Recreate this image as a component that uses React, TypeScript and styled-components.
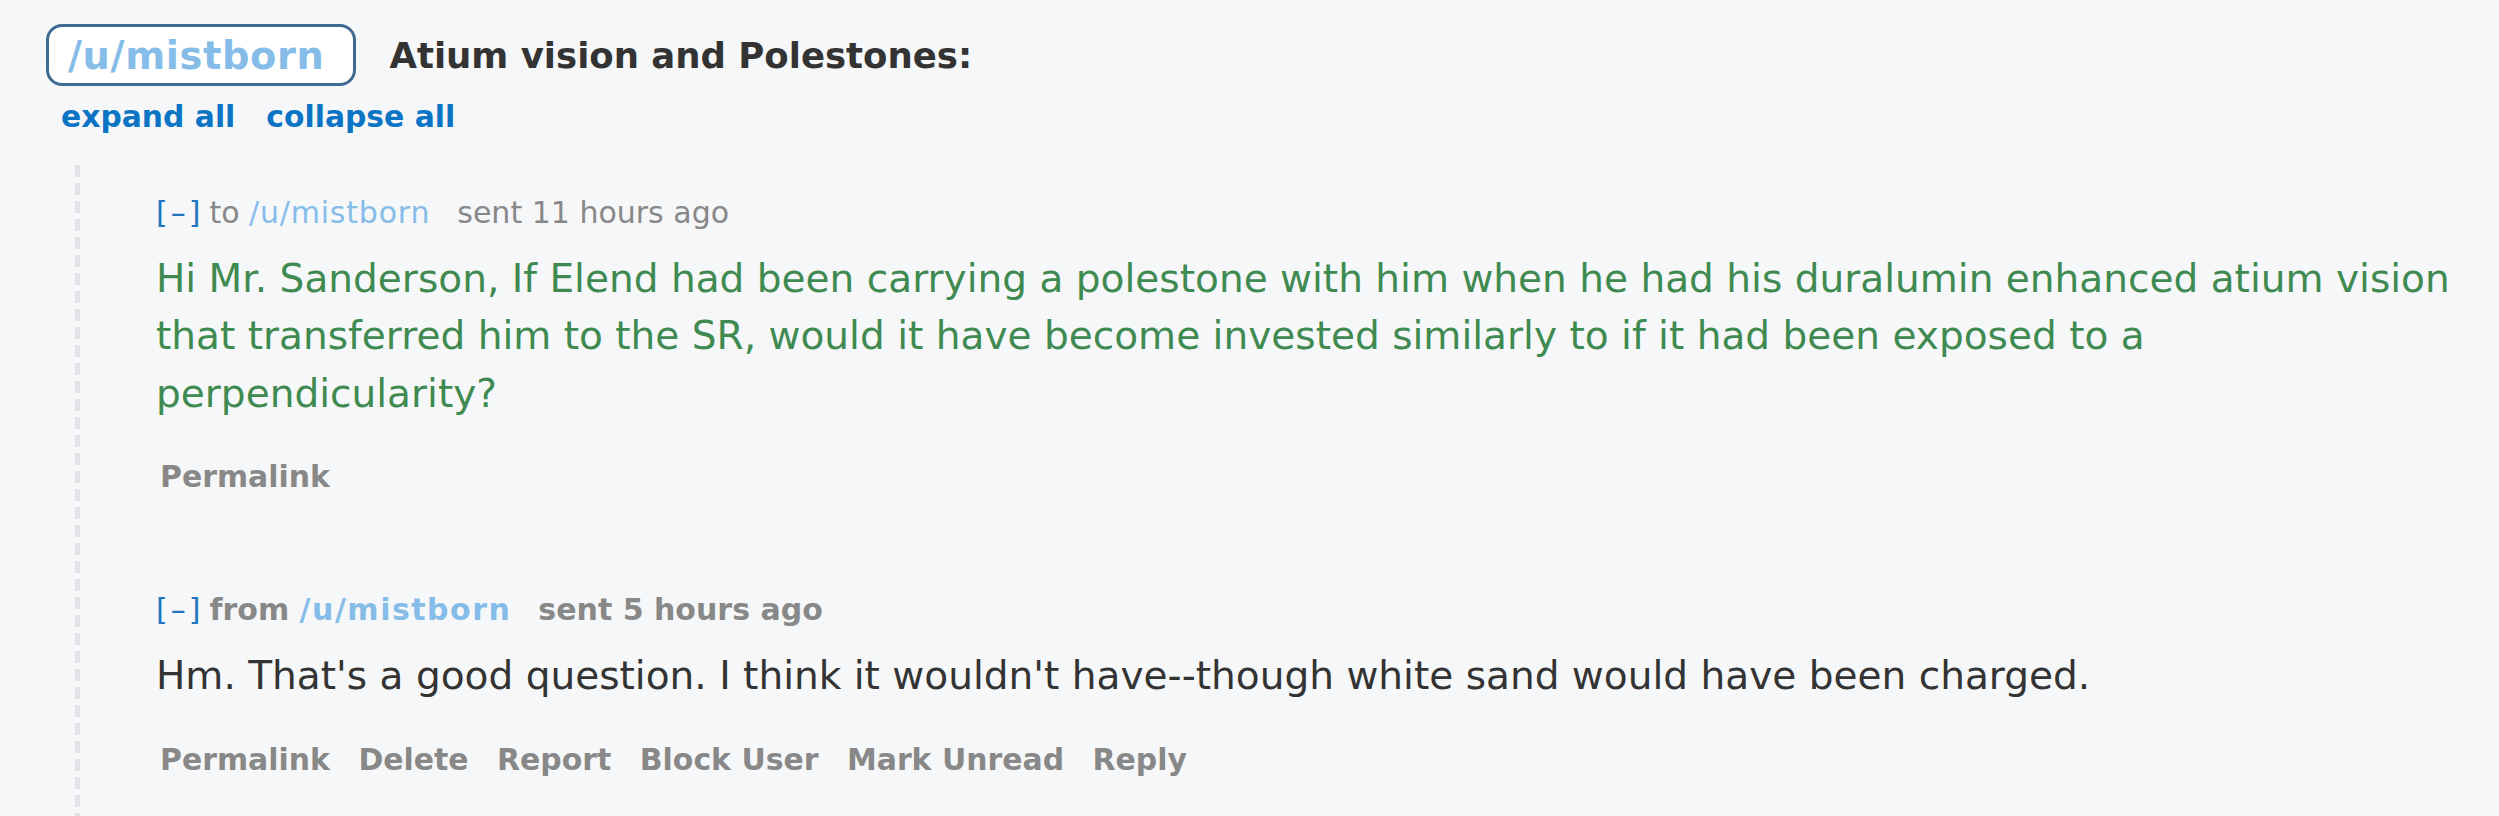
import React from 'react';
import styled, {createGlobalStyle} from "styled-components";

const GlobalStyle = createGlobalStyle`
  html, body {
    margin: 0;
    padding: 0;
    background: #f6f7f9;
  }
  body {
    font-family: "DejaVu Sans", Verdana, sans-serif;
    width: 2499px;
    height: 816px;
    overflow: hidden;
  }
`

const Page = styled.div`
  min-height: 816px;
  padding-top: 24px;
  box-sizing: border-box;
`

const Header = styled.div`
  display: flex;
  align-items: center;
  padding-left: 46px;
  gap: 33px;
`

const UserPill = styled.a`
  display: flex;
  align-items: center;
  box-sizing: border-box;
  height: 62px;
  padding: 0 29px 0 19px;
  background: #fff;
  border: 3px solid #3f6a92;
  border-radius: 16px;
  font-size: 38.4px;
  font-weight: bold;
  letter-spacing: 0.6px;
  color: #86bde8;
  text-decoration: none;
`

const Title = styled.h1`
  margin: 0;
  font-size: 35.5px;
  font-weight: bold;
  color: #333;
`

const Toggles = styled.div`
  display: flex;
  gap: 31px;
  margin: 9px 0 0 61px;
  line-height: 43.5px;
`

const ToggleLink = styled.a`
  font-size: 29.8px;
  font-weight: bold;
  color: #0b74c4;
  text-decoration: none;
`

const Thread = styled.div`
  margin: 26px 0 0 75px;
  padding: 25px 16px 0 81px;
  min-height: 660px;
  background: linear-gradient(#e4e5e8 66%, transparent 0) left top / 5px 18px repeat-y;
`

const Message = styled.div<{$last?: boolean}>`
  margin-bottom: ${p => p.$last ? 0 : 88}px;
`

const Meta = styled.div<{$bold?: boolean}>`
  font-size: 30px;
  line-height: 45px;
  color: #888;
  font-weight: ${p => p.$bold ? 'bold' : 'normal'};
`

const Collapse = styled.span`
  color: #1f74bd;
  font-weight: normal;
  letter-spacing: 3px;
  margin-right: 6px;
`

const Author = styled.span<{$bold?: boolean}>`
  color: #86bde8;
  margin-right: 27px;
  letter-spacing: ${p => p.$bold ? 1.5 : 0.8}px;
`

const Body = styled.p<{$color: string}>`
  margin: 15px 0 0;
  font-size: 39.05px;
  line-height: 57.6px;
  color: ${p => p.$color};
`

const Actions = styled.div`
  display: flex;
  gap: 28.5px;
  margin-top: 32px;
  padding-left: 4px;
  line-height: 45px;
`

const Action = styled.a`
  font-size: 29.9px;
  font-weight: bold;
  color: #888;
  text-decoration: none;
`

function App() {
  return (
    <Page>
      <GlobalStyle/>
      <Header>
        <UserPill>/u/mistborn</UserPill>
        <Title>Atium vision and Polestones:</Title>
      </Header>
      <Toggles>
        <ToggleLink>expand all</ToggleLink>
        <ToggleLink>collapse all</ToggleLink>
      </Toggles>
      <Thread>
        <Message>
          <Meta>
            <Collapse>[–]</Collapse>to <Author>/u/mistborn</Author>sent 11 hours ago
          </Meta>
          <Body $color="#3f8a50">
            Hi Mr. Sanderson, If Elend had been carrying a polestone with him when he had his duralumin enhanced
            atium vision that transferred him to the SR, would it have become invested similarly to if it had been
            exposed to a perpendicularity?
          </Body>
          <Actions>
            <Action>Permalink</Action>
          </Actions>
        </Message>
        <Message $last>
          <Meta $bold>
            <Collapse>[–]</Collapse>from <Author $bold>/u/mistborn</Author>sent 5 hours ago
          </Meta>
          <Body $color="#333">
            Hm. That's a good question. I think it wouldn't have--though white sand would have been charged.
          </Body>
          <Actions>
            {["Permalink", "Delete", "Report", "Block User", "Mark Unread", "Reply"].map(a => (
              <Action key={a}>{a}</Action>
            ))}
          </Actions>
        </Message>
      </Thread>
    </Page>
  );
}

export default App;
